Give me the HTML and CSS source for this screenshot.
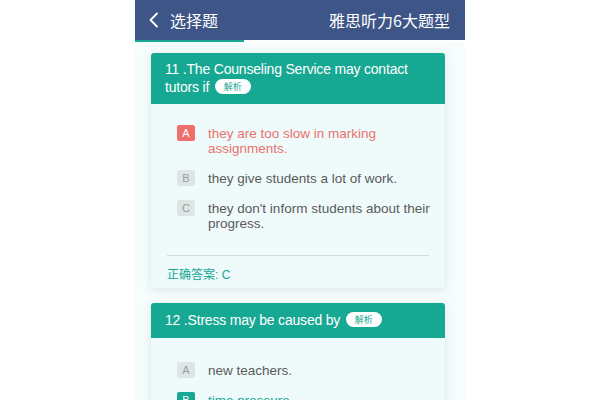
FILE: index.html
```html
<!DOCTYPE html>
<html lang="zh">
<head>
<meta charset="utf-8">
<link rel="stylesheet" href="styles.css">
</head>
<body>
<div class="phone">
  <div class="topbar">
    <div class="left">
      <svg class="back" width="12" height="16" viewBox="0 0 12 16"><path d="M9 1.5 L2.5 8 L9 14.5" fill="none" stroke="#fff" stroke-width="1.8" stroke-linecap="round" stroke-linejoin="round"/></svg>
      <span class="title">选择题</span>
    </div>
    <span class="right-title">雅思听力6大题型</span>
  </div>
  <div class="progress"><div class="progress-fill"></div></div>
  <div class="content">
    <div class="card">
      <div class="card-head">11 .The Counseling Service may contact tutors if <span class="badge">解析</span></div>
      <div class="card-body">
        <div class="options">
          <div class="option wrong"><span class="letter">A</span><span class="text">they are too slow in marking assignments.</span></div>
          <div class="option"><span class="letter">B</span><span class="text">they give students a lot of work.</span></div>
          <div class="option"><span class="letter">C</span><span class="text">they don't inform students about their progress.</span></div>
        </div>
        <div class="divider"></div>
        <div class="answer">正确答案: C</div>
      </div>
    </div>
    <div class="card">
      <div class="card-head single">12 .Stress may be caused by <span class="badge">解析</span></div>
      <div class="card-body">
        <div class="options second">
          <div class="option"><span class="letter">A</span><span class="text">new teachers.</span></div>
          <div class="option right"><span class="letter">B</span><span class="text">time pressure.</span></div>
        </div>
      </div>
    </div>
  </div>
</div>
</body>
</html>
```

FILE: styles.css
```css
html, body {
  margin: 0;
  padding: 0;
  background: #ffffff;
  height: 400px;
  overflow: hidden;
}
body {
  font-family: "Liberation Sans", "Noto Sans CJK SC", sans-serif;
}
.phone {
  width: 330px;
  height: 400px;
  margin: 0 auto;
  background: #f7fcfc;
  overflow: hidden;
}
.topbar {
  height: 40px;
  background: #3d5587;
  display: flex;
  align-items: center;
  justify-content: space-between;
  padding: 0 15px 0 13px;
  color: #fff;
}
.left {
  display: flex;
  align-items: center;
  gap: 10px;
}
.back { display: block; }
.title {
  font-size: 16px;
  font-family: "Noto Sans CJK SC", sans-serif;
}
.right-title {
  font-size: 16px;
  font-family: "Noto Sans CJK SC", sans-serif;
}
.progress {
  height: 2px;
  background: #ffffff;
}
.progress-fill {
  width: 109px;
  height: 2px;
  background: #17a893;
}
.content {
  padding: 11px 20px 0 16px;
  display: flex;
  flex-direction: column;
  gap: 15px;
}
.card {
  border-radius: 3px;
  overflow: hidden;
  background: #effafa;
  box-shadow: 0 2px 8px rgba(120, 170, 170, 0.25);
}
.card-head {
  background: #17a893;
  color: #fff;
  font-size: 14px;
  letter-spacing: -0.2px;
  line-height: 18px;
  padding: 7px 14px 8px 14px;
}
.card-head.single {
  padding: 8px 14px 9px 14px;
}
.badge {
  display: inline-block;
  vertical-align: top;
  background: #fff;
  color: #17a893;
  font-size: 9px;
  letter-spacing: 0;
  line-height: 15px;
  height: 15px;
  margin-top: 1px;
  padding: 0 9px;
  border-radius: 8px;
  margin-left: 2px;
  font-family: "Noto Sans CJK SC", sans-serif;
}
.options {
  padding: 22px 14px 0 26px;
  display: flex;
  flex-direction: column;
  gap: 15px;
}
.options.second {
  padding-top: 25px;
}
.option {
  display: flex;
  align-items: flex-start;
  gap: 13px;
  font-size: 13.5px;
  line-height: 15px;
  color: #5a5a5a;
}
.letter {
  flex: none;
  width: 18px;
  height: 16px;
  margin-top: -1px;
  background: #dfe5e5;
  color: #9aa0a0;
  font-size: 11px;
  line-height: 16px;
  text-align: center;
  border-radius: 2px;
}
.option.wrong { color: #ea726c; }
.option.wrong .letter { background: #ee6f6a; color: #fff; }
.option.right { color: #17a893; }
.option.right .letter { background: #17a893; color: #fff; }
.divider {
  height: 1px;
  background: #cfdede;
  margin: 24px 16px 0 16px;
}
.answer {
  padding: 12px 16px 6px 16px;
  font-size: 12px;
  line-height: 14px;
  color: #17a893;
}
```
